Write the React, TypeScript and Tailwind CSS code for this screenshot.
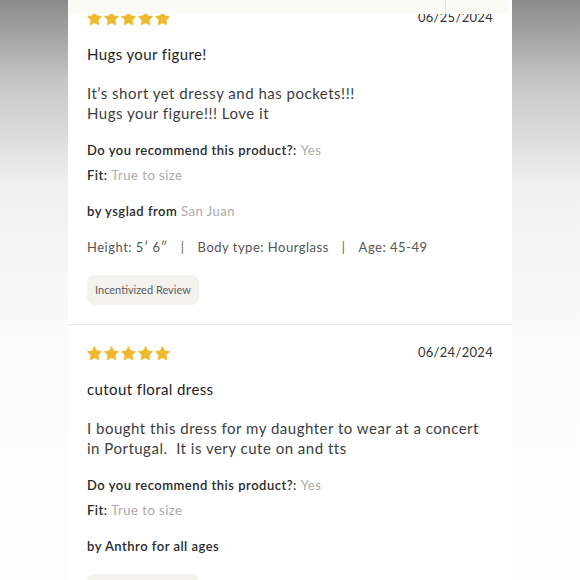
import { Star } from "lucide-react";

type Review = {
  date: string;
  title: string;
  body: string[];
  author: string;
  from?: string;
  stats?: string[];
};

const reviews: Review[] = [
  {
    date: "06/25/2024",
    title: "Hugs your figure!",
    body: ["It’s short yet dressy and has pockets!!!", "Hugs your figure!!! Love it"],
    author: "ysglad",
    from: "San Juan",
    stats: ["Height: 5′ 6″", "Body type: Hourglass", "Age: 45-49"],
  },
  {
    date: "06/24/2024",
    title: "cutout floral dress",
    body: ["I bought this dress for my daughter to wear at a concert", "in Portugal.  It is very cute on and tts"],
    author: "Anthro for all ages",
  },
];

function Stars() {
  return (
    <div className="flex -ml-[1px]">
      {Array.from({ length: 5 }).map((_, i) => (
        <Star key={i} className="w-[17px] h-[17px] text-[#efb92f] fill-[#efb92f]" strokeWidth={0.5} />
      ))}
    </div>
  );
}

function ReviewItem({ review, first }: { review: Review; first?: boolean }) {
  return (
    <div className={`px-[19px] ${first ? "pt-[11px]" : "pt-[21px]"} pb-[19px]`}>
      <div className="flex justify-between items-center h-[14px]">
        <Stars />
        <div className="text-[13px] tracking-[0.3px] text-[#333]">{review.date}</div>
      </div>
      <h3 className="mt-[19px] text-[15px] leading-[20px] tracking-[0.4px] text-[#1c1c1c]">{review.title}</h3>
      <p className="mt-[19px] text-[15px] leading-[20px] tracking-[0.5px] text-[#3d3d3d] whitespace-pre">
        {review.body.join("\n")}
      </p>
      <div className="mt-[19px] text-[13px] leading-[16px] tracking-[0.5px] font-semibold text-[#2a2a2a]">
        Do you recommend this product?: <span className="font-normal text-[#aaa]">Yes</span>
      </div>
      <div className="mt-[9px] text-[13px] leading-[16px] tracking-[0.5px] font-semibold text-[#2a2a2a]">
        Fit: <span className="font-normal text-[#aaa]">True to size</span>
      </div>
      <div className="mt-[20px] text-[13px] leading-[16px] tracking-[0.5px] font-semibold text-[#2a2a2a]">
        by {review.author}
        {review.from && (
          <>
            {" "}from <span className="font-normal text-[#aaa]">{review.from}</span>
          </>
        )}
      </div>
      {review.stats && (
        <div className="mt-[20px] flex items-center gap-[13px] text-[13px] leading-[16px] tracking-[0.5px] text-[#555]">
          {review.stats.map((s, i) => (
            <span key={s} className="flex items-center gap-[13px]">
              {i > 0 && <span className="text-[#666]">|</span>}
              {s}
            </span>
          ))}
        </div>
      )}
      <div className="mt-[20px] inline-flex items-center h-[30px] px-[8px] rounded-[8px] bg-[#f4f2ee] text-[11px] text-[#5a5a5a]">
        Incentivized Review
      </div>
    </div>
  );
}

export default function App() {
  return (
    <div
      className="relative w-[580px] h-[580px] overflow-hidden bg-[linear-gradient(to_bottom,#8a8a8a_0%,#c6c6c6_14%,#f0f0f0_32%,#fbfbfb_60%,#fdfdfd_100%)]"
      style={{ fontFamily: "Lato, 'Noto Sans', sans-serif" }}
    >
      <div className="ml-[68px] w-[444px] h-full bg-white">
        {reviews.map((r, i) => (
          <div key={r.date} className={i > 0 ? "border-t border-[#e6e6e6]" : ""}>
            <ReviewItem review={r} first={i === 0} />
          </div>
        ))}
      </div>
      {/* sticky header edge */}
      <div className="absolute top-0 left-[68px] w-[440px] h-[14px] bg-[#fbfbf5]">
        <div className="absolute left-[377px] top-0 h-full w-px bg-[#e4e4de]" />
      </div>
    </div>
  );
}
